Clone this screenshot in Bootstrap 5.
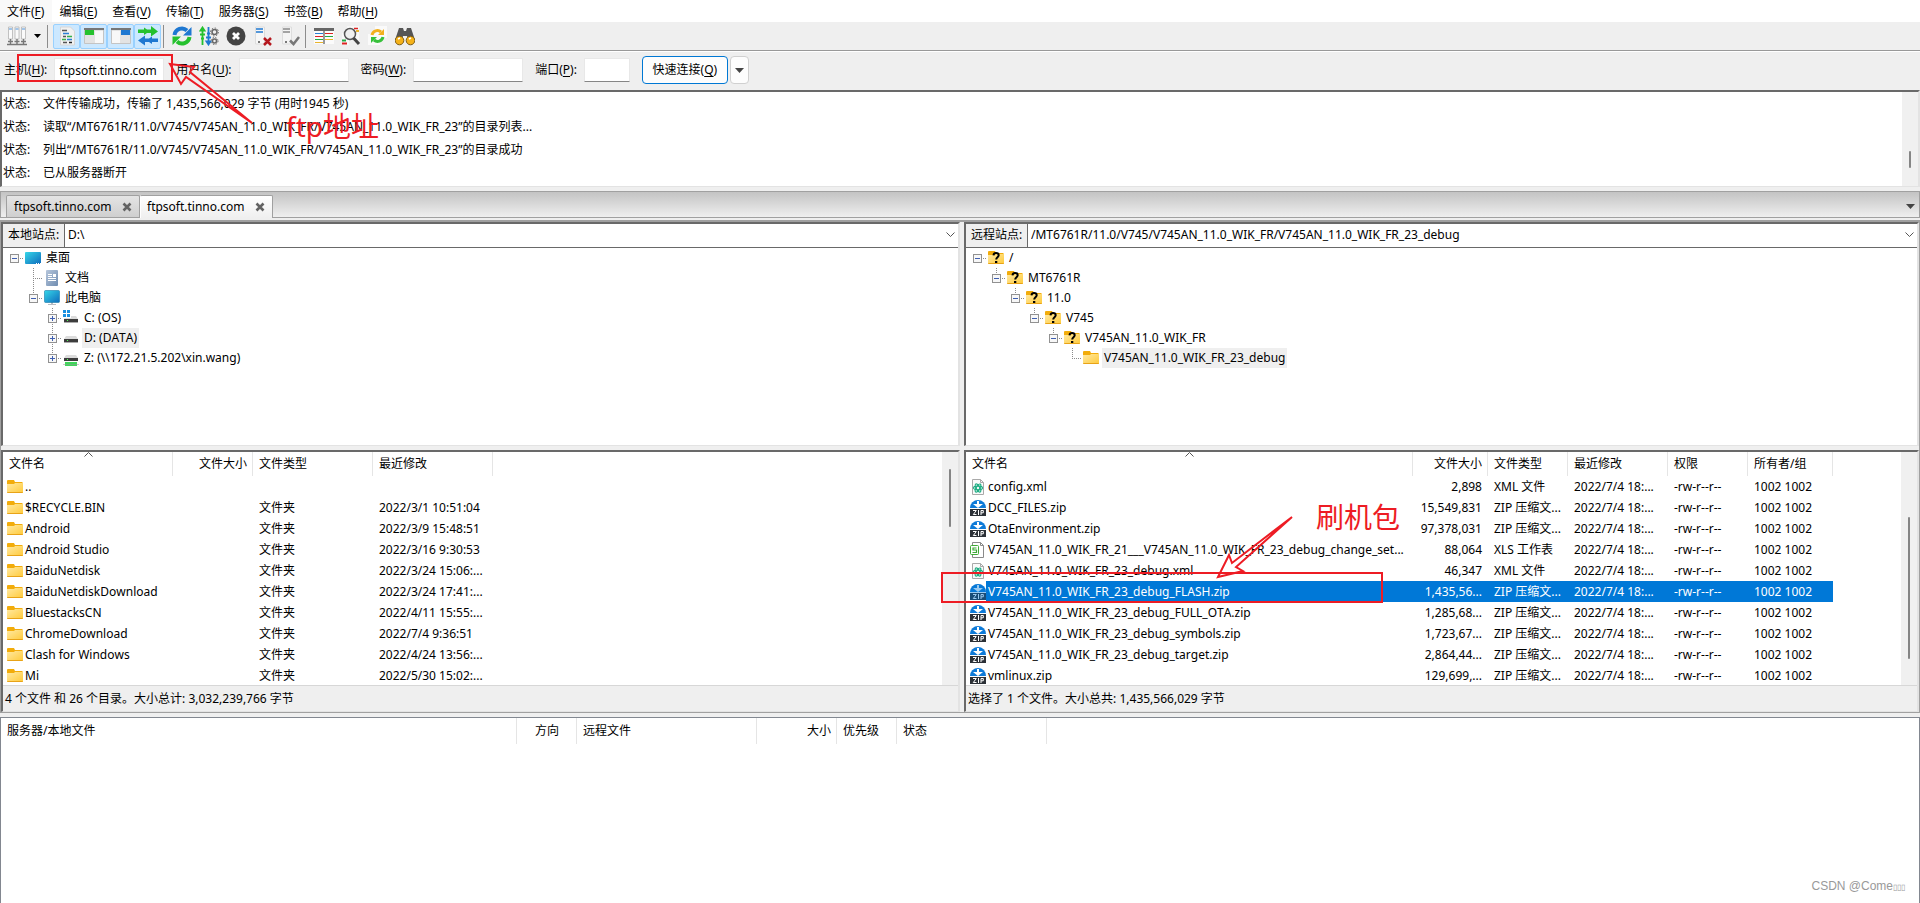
<!DOCTYPE html>
<html lang="zh-CN">
<head>
<meta charset="utf-8">
<meta name="viewport" content="width=device-width, initial-scale=1">
<title>FileZilla</title>
<link href="https://cdn.jsdelivr.net/npm/bootstrap@5.3.0/dist/css/bootstrap.min.css" rel="stylesheet">
<style>
  body { font-family: "Noto Sans", "Noto Sans CJK SC", sans-serif; font-size: 12px; font-kerning: none; line-height: 20px; color: #000; background: #efefef; white-space: nowrap; }
  u { text-underline-offset: 2px; }
  .menubar { height: 22px; background: #fff; }
  .menubar a { color: #000; text-decoration: none; padding: 2px 8px 0 7px; height: 22px; }
  .menubar a:first-child { background: #f9f9f9; }
  .toolbar { height: 29px; border-bottom: 1px solid #999; padding-left: 3px; }
  .tool { width: 27px; height: 25px; padding: 0; border: 1px solid transparent; border-radius: 2px; background: none; display: flex; align-items: center; justify-content: center; }
  .tool.active { background: #cce8ff; border-color: #99d1ff; }
  .caret-tool { width: 15px; }
  .divider { width: 1px; height: 23px; background: #8c8c8c; margin: 0 5px 0 2px; }
  .divider.narrow { margin-right: 4px; }
  .quick { height: 39px; border-top: 1px solid #fff; padding: 0 0 2px 4px; }
  .quick input { height: 24px; width: 110px; border: 1px solid #e8e8e8; border-bottom-color: #868686; background: #fff; padding: 0 4px; margin: 0 12px 0 7px; outline: 0; border-radius: 1px; }
  .quick #port { width: 46px; }
  .connect { height: 28px; width: 86px; border: 1px solid #0078d4; border-radius: 4px; background: #fdfdfd; padding: 0; }
  .connect-menu { height: 28px; width: 19px; margin-left: 2px; border: 1px solid #d0d0d0; border-radius: 4px; background: #fdfdfd; padding: 0; display: flex; align-items: center; justify-content: center; }
  .log { height: 97px; border: 1px solid #e3e3e3; border-top: 2px solid #696969; border-left: 2px solid #696969; border-right-width: 2px; background: #fff; overflow: hidden; }
  .log-line { line-height: 23px; padding-left: 1px; }
  .log-line span:first-child { display: inline-block; width: 40px; }
  .rail { background: #f0f0f0; width: 16px; flex: none; position: relative; }
  .thumb { position: absolute; left: 7px; width: 2px; background: #858585; border-radius: 1px; }
  .tabbar { margin-top: 4px; height: 27px; border: 1px solid #a0a0a0; background: linear-gradient(#c3c3c3, #efefef); padding: 3px 0 0 5px; }
  .tab-item { height: 22px; width: 134px; border: 1px solid #a0a0a0; border-bottom: 0; background: linear-gradient(#e4e4e4, #cfcfcf); padding: 0 7px; border-radius: 2px 2px 0 0; }
  .tab-item.active { background: linear-gradient(#fff, #efefef); height: 23px; border-left-color: #fff; width: 133px; padding-left: 6px; }
  .tab-item button, .tabbar > button { border: 0; background: none; padding: 0; display: flex; }
  .work { border: 1px solid #a0a0a0; border-top: 2px solid #a0a0a0; margin-top: 2px; background: #efefef; gap: 4px; }
  .side-local { width: 50%; }
  .side-remote { flex: 1 1 0; min-width: 0; }
  .pane { border-left: 2px solid #696969; border-top: 2px solid #696969; border-right: 2px solid #e3e3e3; border-bottom: 1px solid #e3e3e3; background: #fff; }
  .pathbar { height: 24px; border-bottom: 1px solid #696969; }
  .pathbar label { width: 62px; background: #efefef; border-right: 1px solid #696969; padding-left: 5px; line-height: 22px; }
  .pathbar select { appearance: none; border: 0; background: #fff; flex: 1; min-width: 0; padding: 0 3px 1px; outline: 0; }
  .pathbar svg { position: absolute; right: 3px; top: 8px; pointer-events: none; }
  .tree { height: 197px; overflow: hidden; padding-left: 2px; }
  .node { height: 20px; display: flex; align-items: center; }
  .node .gap { width: 19px; }
  .joint { width: 19px; height: 20px; display: flex; align-items: center; justify-content: center; margin-right: 1px; background-repeat: no-repeat;
    --h: repeating-linear-gradient(90deg, #8a8a8a 0 1px, transparent 1px 2px);
    --v: repeating-linear-gradient(#8a8a8a 0 1px, transparent 1px 2px); }
  .joint.h { background-image: var(--h); background-position: 9px 10px; background-size: 10px 1px; }
  .joint.th { background-image: var(--h), var(--v); background-position: 9px 10px, 9px 0; background-size: 10px 1px, 1px 11px; }
  .joint.vh { background-image: var(--h), var(--v); background-position: 9px 10px, 9px 0; background-size: 10px 1px, 1px 20px; }
  .node-name { padding: 0 2px; margin-left: 3px; }
  .node-name.picked { background: #efefef; }
  .files { height: 233px; overflow: hidden; }
  .list { table-layout: fixed; border-collapse: separate; border-spacing: 0; flex: none; }
  .list th { font-weight: 400; height: 24px; padding: 0 5px 0 6px; border-right: 1px solid #e5e5e5; position: relative; }
  .list td { height: 21px; line-height: 21px; padding: 0 6px; overflow: hidden; }
  .list td:first-child { padding: 0 0 0 4px; }
  .list .num { text-align: right; }
  .entry { display: flex; align-items: center; height: 21px; }
  .entry span { flex: 1; padding-left: 2px; height: 21px; }
  .sort { position: absolute; left: 50%; top: 0; margin-left: -4px; }
  .chosen td:not(:first-child), .chosen .entry span { background: #0078d7; color: #fff; }
  .summary { height: 26px; line-height: 25px; border-top: 1px solid #d7d7d7; background: #efefef; padding-left: 2px; }
  .queue { margin-top: 4px; border: 1px solid #828790; border-bottom: 0; background: #fff; }
  .queue .list th { height: 26px; }
  .notes { position: absolute; left: 0; top: 0; pointer-events: none; overflow: visible; }
  .notes text { font-size: 28px; fill: #ed1c24; }
  .watermark { position: absolute; right: 15px; bottom: 5px; font-family: "Liberation Sans", sans-serif; color: #999; }
  .watermark span { font-size: 8px; }
</style>
</head>
<body class="d-flex flex-column min-vh-100 position-relative">

<svg width="0" height="0" class="position-absolute" aria-hidden="true">
  <defs>
    <linearGradient id="gFold" x1="0" y1="0" x2="1" y2="1"><stop offset="0" stop-color="#ffe9a2"/><stop offset="1" stop-color="#ffca3a"/></linearGradient>
    <linearGradient id="gScr" x1="0" y1="0" x2="1" y2="1"><stop offset="0" stop-color="#35d6e8"/><stop offset="1" stop-color="#0f6cbd"/></linearGradient>
    <linearGradient id="gDoc" x1="0" y1="0" x2="1" y2="1"><stop offset="0" stop-color="#b7c7dc"/><stop offset="1" stop-color="#6f8cb0"/></linearGradient>
  </defs>
  <symbol id="folder" viewBox="0 0 16 16"><path d="M0 2a1 1 0 0 1 1-1h6l1 2h7l1 1v8H0z" fill="#f2ac0b"/><path d="M0 5h7l1-1h8v9a1 1 0 0 1-1 1H1a1 1 0 0 1-1-1z" fill="url(#gFold)"/><path d="M0 13h16a1 1 0 0 1-1 1H1a1 1 0 0 1-1-1z" fill="#e8a317"/></symbol>
  <symbol id="unknown" viewBox="0 0 16 16"><use href="#folder"/><path d="M5.500 5.400C5.700 3.400 6.900 3 8 3c1.600 0 2.700.9 2.700 2.300C10.700 7.200 8.200 7.300 8.200 9.500" fill="none" stroke="#000" stroke-width="2"/><path d="M7 11h2.300v2H7z"/></symbol>
  <symbol id="desktop" viewBox="0 0 16 16"><rect y="2" width="16" height="12" rx="1" fill="url(#gScr)"/><path d="M11 13.500h1m1 0h1m1 0h1" stroke="#fff"/></symbol>
  <symbol id="pc" viewBox="0 0 16 16"><path d="M7 12h2v3H7zM4 14h8v1H4z" fill="#b7bcc2"/><rect x=".5" y=".5" width="15" height="12" rx="1" fill="url(#gScr)" stroke="#1a7aa8" stroke-width=".6"/></symbol>
  <symbol id="doc" viewBox="0 0 16 16"><rect x="2" width="12" height="16" rx="1" fill="url(#gDoc)"/><path d="M4 4.500h4M4 6.500h4M4 8.500h8M4 10.500h8" stroke="#fff"/><path d="M9 4h3v3H9z" fill="#fff"/></symbol>
  <symbol id="drive" viewBox="0 0 16 16"><path d="M3 6h10l2 3H1z" fill="#dcdcdc"/><path d="M1 9h14v3H1z" fill="#3c3c3c"/><path d="M1 12h14v1H1z" fill="#aaa"/><path d="M4 10h1v1H4z" fill="#5f5"/></symbol>
  <symbol id="osdrive" viewBox="0 0 16 16"><use href="#drive"/><path d="M0 0h8v8H0z" fill="#fff"/><path d="M0 0h3v3H0zM4 0h3v3H4zM0 4h3v3H0zM4 4h3v3H4z" fill="#1a8fe0"/></symbol>
  <symbol id="netdrive" viewBox="0 0 16 16"><path d="M3 5h10l2 3H1z" fill="#dcdcdc"/><path d="M1 8h14v3H1z" fill="#3c3c3c"/><path d="M4 9h1v1H4z" fill="#5f5"/><path d="M2 12h12v4H2z" fill="#3fd65a"/><path d="M0 14.500h16" stroke="#999" stroke-width=".5"/></symbol>
  <symbol id="minus" viewBox="0 0 9 9"><rect x=".5" y=".5" width="8" height="8" fill="#f7f7f7" stroke="#919191"/><path d="M2 4.500h5" stroke="#3f5fb0"/></symbol>
  <symbol id="plus" viewBox="0 0 9 9"><use href="#minus"/><path d="M4.500 2v5" stroke="#3f5fb0"/></symbol>
  <symbol id="xml" viewBox="0 0 16 16"><path d="M2.500.5h8l3 3v12h-11z" fill="#fafafa" stroke="#a9a9a9"/><path d="M10.500.5v3h3" fill="none" stroke="#a9a9a9"/><g fill="none" stroke="#1fae84" stroke-width="1.200"><ellipse cx="8" cy="9" rx="4.500" ry="1.800"/><ellipse cx="8" cy="9" rx="4.500" ry="1.800" transform="rotate(60 8 9)"/><ellipse cx="8" cy="9" rx="4.500" ry="1.800" transform="rotate(120 8 9)"/></g></symbol>
  <symbol id="zip" viewBox="0 0 16 16"><path d="M0 8a8 8 0 0 1 16 0z" fill="#0d7ad8"/><path d="M7 1h2v3h4L8 8 3 4h4z" fill="#fff"/><rect y="9" width="16" height="7" fill="#2b3036"/><path d="M3 10.500h3.300L3.300 14.500H6.500M8.500 10v5M11 15v-4.500h2.300v2.300H11" fill="none" stroke="#fff"/></symbol>
  <symbol id="xls" viewBox="0 0 16 16"><path d="M2.500.5h8l3 3v12h-11z" fill="#fff" stroke="#8a8a8a"/><path d="M10.500.5v3h3" fill="none" stroke="#8a8a8a"/><rect x=".5" y="3.500" width="8" height="9" rx="1" fill="#fff" stroke="#3faa36"/><path d="M6.500 6H3v2h3.500v2.500H2.500" fill="none" stroke="#3faa36" stroke-width="1.200"/></symbol>
  <symbol id="closex" viewBox="0 0 10 10"><path d="M1.500 1.500l7 7M8.500 1.500l-7 7" stroke="#636363" stroke-width="2.600"/></symbol>
  <symbol id="down" viewBox="0 0 9 5"><path d="M0 0h9L4.500 5z" fill="#444"/></symbol>
  <symbol id="chev" viewBox="0 0 9 6"><path d="M.5.5l4 4 4-4" fill="none" stroke="#555"/></symbol>
</svg>

<nav class="menubar d-flex" aria-label="菜单">
  <a href="#">文件(<u>F</u>)</a><a href="#">编辑(<u>E</u>)</a><a href="#">查看(<u>V</u>)</a><a href="#">传输(<u>T</u>)</a><a href="#">服务器(<u>S</u>)</a><a href="#">书签(<u>B</u>)</a><a href="#">帮助(<u>H</u>)</a>
</nav>

<div class="toolbar d-flex align-items-center" role="toolbar">
  <button class="tool" aria-label="站点管理器"><svg width="20" height="20"><g fill="#fafafa" stroke="#b4b4b4" stroke-width=".8"><path d="M1.500 1h4v12h-4zM8 1h4v12H8zM14.500 1h4v12h-4z"/></g><path d="M2 3h3M8.500 3h3M15 3h3" stroke="#4a90d9"/><path d="M1 15.500h5M7.500 15.500h5M14 15.500h5M0 18.500h20M3.500 13v5M10 13v5M16.500 13v5" stroke="#777" stroke-width="1.400"/></svg></button>
  <button class="tool caret-tool" aria-label="站点列表"><svg width="7" height="4"><path d="M0 0h7L3.500 4z"/></svg></button>
  <div class="divider"></div>
  <button class="tool active" aria-label="消息日志"><svg width="20" height="20"><path d="M3.500 1h10l4 4v14h-14z" fill="#f1f1f1" stroke="#d6d6d6"/><path d="M5 4.500h5M6 10.500h3M6 16.500h4" stroke="#555" stroke-width="1.500"/><path d="M6 7.500h6M10 13.500h5" stroke="#2b7fd4" stroke-width="1.500"/><path d="M10 10.500h5M5 13.500h4" stroke="#35b04a" stroke-width="1.500"/><path d="M12 16.500h3" stroke="#222" stroke-width="1.500"/></svg></button>
  <button class="tool active" aria-label="本地目录树"><svg width="20" height="20"><path d="M.5 2.500h19v15H.5z" fill="#e3e3e3" stroke="#c4c4c4"/><path d="M0 2h20v2H0z" fill="#777"/><path d="M11 5h8v12h-8z" fill="#f8f8f8"/><path d="M1 4h9v5H1z" fill="#25c12e"/></svg></button>
  <button class="tool active" aria-label="远程目录树"><svg width="20" height="20"><path d="M.5 2.500h19v15H.5z" fill="#e3e3e3" stroke="#c4c4c4"/><path d="M0 2h20v2H0z" fill="#777"/><path d="M1 5h8v12H1z" fill="#f8f8f8"/><path d="M10 4h9v5h-9z" fill="#1f78d1"/></svg></button>
  <button class="tool active" aria-label="传输队列"><svg width="20" height="20"><path d="M0 3.500h6v-2l3 2h4V0l7 5.500-7 5V7H9L6 9V7H0z" fill="#25c12e"/><path d="M20 12.500h-6v-2l-3 2H7V9.500l-7 5 7 5V16h4l3 2v-2h6z" fill="#1f78d1"/></svg></button>
  <div class="divider narrow"></div>
  <button class="tool" aria-label="刷新"><svg width="20" height="20"><path d="M2.500 9A7.500 7.500 0 0 1 15 4.500" fill="none" stroke="#1f78d1" stroke-width="4"/><path d="M19.500 1v8.500H11z" fill="#1f78d1"/><path d="M17.500 11A7.500 7.500 0 0 1 5 15.500" fill="none" stroke="#25c12e" stroke-width="4"/><path d="M.5 19v-8.500H9z" fill="#25c12e"/></svg></button>
  <button class="tool" aria-label="处理队列"><svg width="20" height="20"><path d="M3.500 19V3M1.500 4.500l2-3 2 3zM1 8.500h5M2 12.500h3" fill="#25c12e" stroke="#25c12e" stroke-width="1.800"/><path d="M9.500 1v16M7.500 15.500l2 3 2-3zM7 11.500h5M8 7.500h3" fill="#1f78d1" stroke="#1f78d1" stroke-width="1.800"/><g fill="none" stroke="#666"><circle cx="15.500" cy="6" r="2.500" stroke-width="1.500"/><circle cx="15.500" cy="6" r="4" stroke-dasharray="1.500 1.600"/><circle cx="15.500" cy="15" r="2" stroke-width="1.500"/><circle cx="15.500" cy="15" r="3.500" stroke-dasharray="1.400 1.400"/></g></svg></button>
  <button class="tool" aria-label="取消"><svg width="20" height="20"><circle cx="10" cy="10" r="9.500" fill="#444"/><path d="M7 7l6 6M13 7l-6 6" stroke="#fff" stroke-width="2.800"/></svg></button>
  <button class="tool" aria-label="断开"><svg width="20" height="20"><path d="M2.500 1h9v17h-9z" fill="#f7f7f7" stroke="#ddd"/><path d="M3 3h7M3 6h7" stroke="#1f78d1" stroke-width="1.500"/><path d="M5 16h2" stroke="#777" stroke-width="2"/><path d="M11 12l7 7M18 12l-7 7" stroke="#b5181f" stroke-width="2.500"/></svg></button>
  <button class="tool" aria-label="重新连接"><svg width="20" height="20"><path d="M2.500 1h9v17h-9z" fill="#f4f4f4" stroke="#ddd"/><path d="M3 3h7M3 6h7" stroke="#888" stroke-width="1.500"/><path d="M5 16h2" stroke="#777" stroke-width="2"/><path d="M10 14.500l3.500 3.500 5.500-7" fill="none" stroke="#777" stroke-width="2.500"/></svg></button>
  <div class="divider narrow"></div>
  <button class="tool" aria-label="过滤"><svg width="20" height="18"><path d="M0 1h20v16H0z" fill="#fbfbfb"/><path d="M0 1h20v3H0z" fill="#666"/><path d="M1 6.500h8" stroke="#2b7fd4"/><path d="M1 9.500h8M11 6.500h8" stroke="#d22"/><path d="M1 12.500h8M11 9.500h8" stroke="#2a4"/><path d="M1 15.500h8M11 12.500h8" stroke="#e9b42c"/><path d="M10 4v13" stroke="#777" stroke-width="1.500"/></svg></button>
  <button class="tool" aria-label="搜索"><svg width="20" height="20"><path d="M6 0h12v14H6zM1 7h7v12H1z" fill="#f8f8f8"/><path d="M13 2.500h4" stroke="#d22" stroke-width="1.500"/><path d="M15 5h3" stroke="#e9b42c" stroke-width="2"/><path d="M1 14.500h4" stroke="#2a4" stroke-width="2"/><path d="M1 17.500h5" stroke="#d22" stroke-width="2"/><circle cx="9" cy="8" r="5.500" fill="#eee" fill-opacity=".8" stroke="#555" stroke-width="1.500"/><path d="M12.500 12l5.500 6" stroke="#444" stroke-width="3"/></svg></button>
  <button class="tool" aria-label="同步浏览"><svg width="20" height="20"><path d="M7 0h12v12H7zM0 8h12v11H0z" fill="#fafafa"/><path d="M4 9a5.500 5.500 0 0 1 9-3" fill="none" stroke="#f2b01e" stroke-width="3"/><path d="M16 3v6h-6z" fill="#f2b01e"/><path d="M15 11a5.500 5.500 0 0 1-9 3" fill="none" stroke="#38c13c" stroke-width="3"/><path d="M3 17v-6h6z" fill="#38c13c"/></svg></button>
  <button class="tool" aria-label="查找"><svg width="20" height="20"><path d="M4 2h4l1 3h2l1-3h4l4 12h-7l-1-4H8l-1 4H0z" fill="#555"/><circle cx="4.500" cy="14.500" r="4.300" fill="#f5b21a" stroke="#7a5b18"/><circle cx="15.500" cy="14.500" r="4.300" fill="#f5b21a" stroke="#7a5b18"/><path d="M3 13l2-1M14 13l2-1" stroke="#fff" stroke-width="1.500"/></svg></button>
</div>

<form class="quick d-flex align-items-center">
  <label for="host">主机(<u>H</u>):</label><input id="host" value="ftpsoft.tinno.com">
  <label for="user">用户名(<u>U</u>):</label><input id="user">
  <label for="pass">密码(<u>W</u>):</label><input id="pass" type="password">
  <label for="port">端口(<u>P</u>):</label><input id="port">
  <button type="button" class="connect">快速连接(<u>Q</u>)</button>
  <button type="button" class="connect-menu" aria-label="历史"><svg width="9" height="5"><use href="#down"/></svg></button>
</form>

<section class="log d-flex" aria-label="日志">
  <div class="flex-grow-1">
    <div class="log-line"><span>状态:</span><span>文件传输成功，传输了 1,435,566,029 字节 (用时1945 秒)</span></div>
    <div class="log-line"><span>状态:</span><span>读取“/MT6761R/11.0/V745/V745AN_11.0_WIK_FR/V745AN_11.0_WIK_FR_23”的目录列表...</span></div>
    <div class="log-line"><span>状态:</span><span>列出“/MT6761R/11.0/V745/V745AN_11.0_WIK_FR/V745AN_11.0_WIK_FR_23”的目录成功</span></div>
    <div class="log-line"><span>状态:</span><span>已从服务器断开</span></div>
  </div>
  <div class="rail"><div class="thumb" style="top:59px;height:17px"></div></div>
</section>

<div class="tabbar d-flex">
  <div class="tab-item d-flex align-items-center justify-content-between">ftpsoft.tinno.com<button aria-label="关闭"><svg width="10" height="10"><use href="#closex"/></svg></button></div>
  <div class="tab-item active d-flex align-items-center justify-content-between">ftpsoft.tinno.com<button aria-label="关闭"><svg width="10" height="10"><use href="#closex"/></svg></button></div>
  <button class="ms-auto me-1 align-self-center" aria-label="标签列表"><svg width="9" height="5"><use href="#down"/></svg></button>
</div>

<main class="work d-flex">
  <section class="side-local">
    <div class="pane">
      <div class="pathbar d-flex position-relative"><label for="lpath">本地站点:</label><select id="lpath"><option>D:\</option></select><svg width="9" height="6"><use href="#chev"/></svg></div>
      <div class="tree">
        <div class="node"><span class="joint h"><svg width="9" height="9"><use href="#minus"/></svg></span><svg width="16" height="16"><use href="#desktop"/></svg><span class="node-name">桌面</span></div>
        <div class="node"><span class="gap"></span><span class="joint vh"></span><svg width="16" height="16"><use href="#doc"/></svg><span class="node-name">文档</span></div>
        <div class="node"><span class="gap"></span><span class="joint th"><svg width="9" height="9"><use href="#minus"/></svg></span><svg width="16" height="16"><use href="#pc"/></svg><span class="node-name">此电脑</span></div>
        <div class="node"><span class="gap"></span><span class="gap"></span><span class="joint vh"><svg width="9" height="9"><use href="#plus"/></svg></span><svg width="16" height="16"><use href="#osdrive"/></svg><span class="node-name">C: (OS)</span></div>
        <div class="node"><span class="gap"></span><span class="gap"></span><span class="joint vh"><svg width="9" height="9"><use href="#plus"/></svg></span><svg width="16" height="16"><use href="#drive"/></svg><span class="node-name picked">D: (DATA)</span></div>
        <div class="node"><span class="gap"></span><span class="gap"></span><span class="joint th"><svg width="9" height="9"><use href="#plus"/></svg></span><svg width="16" height="16"><use href="#netdrive"/></svg><span class="node-name">Z: (\\172.21.5.202\xin.wang)</span></div>
      </div>
    </div>
    <div class="pane mt-1">
      <div class="files d-flex justify-content-between">
        <table class="list">
          <colgroup><col style="width:170px"><col style="width:80px"><col style="width:120px"><col style="width:120px"></colgroup>
          <thead><tr><th>文件名<svg class="sort" width="9" height="5"><path d="M.5 4.500l4-4 4 4" fill="none" stroke="#555"/></svg></th><th class="num">文件大小</th><th>文件类型</th><th>最近修改</th></tr></thead>
          <tbody>
            <tr><td><div class="entry"><svg width="16" height="16"><use href="#folder"/></svg><span>..</span></div></td><td></td><td></td><td></td></tr>
            <tr><td><div class="entry"><svg width="16" height="16"><use href="#folder"/></svg><span>$RECYCLE.BIN</span></div></td><td></td><td>文件夹</td><td>2022/3/1 10:51:04</td></tr>
            <tr><td><div class="entry"><svg width="16" height="16"><use href="#folder"/></svg><span>Android</span></div></td><td></td><td>文件夹</td><td>2022/3/9 15:48:51</td></tr>
            <tr><td><div class="entry"><svg width="16" height="16"><use href="#folder"/></svg><span>Android Studio</span></div></td><td></td><td>文件夹</td><td>2022/3/16 9:30:53</td></tr>
            <tr><td><div class="entry"><svg width="16" height="16"><use href="#folder"/></svg><span>BaiduNetdisk</span></div></td><td></td><td>文件夹</td><td>2022/3/24 15:06:...</td></tr>
            <tr><td><div class="entry"><svg width="16" height="16"><use href="#folder"/></svg><span>BaiduNetdiskDownload</span></div></td><td></td><td>文件夹</td><td>2022/3/24 17:41:...</td></tr>
            <tr><td><div class="entry"><svg width="16" height="16"><use href="#folder"/></svg><span>BluestacksCN</span></div></td><td></td><td>文件夹</td><td>2022/4/11 15:55:...</td></tr>
            <tr><td><div class="entry"><svg width="16" height="16"><use href="#folder"/></svg><span>ChromeDownload</span></div></td><td></td><td>文件夹</td><td>2022/7/4 9:36:51</td></tr>
            <tr><td><div class="entry"><svg width="16" height="16"><use href="#folder"/></svg><span>Clash for Windows</span></div></td><td></td><td>文件夹</td><td>2022/4/24 13:56:...</td></tr>
            <tr><td><div class="entry"><svg width="16" height="16"><use href="#folder"/></svg><span>Mi</span></div></td><td></td><td>文件夹</td><td>2022/5/30 15:02:...</td></tr>
          </tbody>
        </table>
        <div class="rail"><div class="thumb" style="top:17px;height:58px"></div></div>
      </div>
      <div class="summary">4 个文件 和 26 个目录。大小总计: 3,032,239,766 字节</div>
    </div>
  </section>

  <section class="side-remote">
    <div class="pane">
      <div class="pathbar d-flex position-relative"><label for="rpath">远程站点:</label><select id="rpath"><option>/MT6761R/11.0/V745/V745AN_11.0_WIK_FR/V745AN_11.0_WIK_FR_23_debug</option></select><svg width="9" height="6"><use href="#chev"/></svg></div>
      <div class="tree">
        <div class="node"><span class="joint h"><svg width="9" height="9"><use href="#minus"/></svg></span><svg width="16" height="16"><use href="#unknown"/></svg><span class="node-name">/</span></div>
        <div class="node"><span class="gap"></span><span class="joint th"><svg width="9" height="9"><use href="#minus"/></svg></span><svg width="16" height="16"><use href="#unknown"/></svg><span class="node-name">MT6761R</span></div>
        <div class="node"><span class="gap"></span><span class="gap"></span><span class="joint th"><svg width="9" height="9"><use href="#minus"/></svg></span><svg width="16" height="16"><use href="#unknown"/></svg><span class="node-name">11.0</span></div>
        <div class="node"><span class="gap"></span><span class="gap"></span><span class="gap"></span><span class="joint th"><svg width="9" height="9"><use href="#minus"/></svg></span><svg width="16" height="16"><use href="#unknown"/></svg><span class="node-name">V745</span></div>
        <div class="node"><span class="gap"></span><span class="gap"></span><span class="gap"></span><span class="gap"></span><span class="joint th"><svg width="9" height="9"><use href="#minus"/></svg></span><svg width="16" height="16"><use href="#unknown"/></svg><span class="node-name">V745AN_11.0_WIK_FR</span></div>
        <div class="node"><span class="gap"></span><span class="gap"></span><span class="gap"></span><span class="gap"></span><span class="gap"></span><span class="joint th"></span><svg width="16" height="16"><use href="#folder"/></svg><span class="node-name picked">V745AN_11.0_WIK_FR_23_debug</span></div>
      </div>
    </div>
    <div class="pane mt-1">
      <div class="files d-flex justify-content-between">
        <table class="list">
          <colgroup><col style="width:447px"><col style="width:75px"><col style="width:80px"><col style="width:100px"><col style="width:80px"><col style="width:85px"></colgroup>
          <thead><tr><th>文件名<svg class="sort" width="9" height="5"><path d="M.5 4.500l4-4 4 4" fill="none" stroke="#555"/></svg></th><th class="num">文件大小</th><th>文件类型</th><th>最近修改</th><th>权限</th><th>所有者/组</th></tr></thead>
          <tbody>
            <tr><td><div class="entry"><svg width="16" height="16"><use href="#xml"/></svg><span>config.xml</span></div></td><td class="num">2,898</td><td>XML 文件</td><td>2022/7/4 18:...</td><td>-rw-r--r--</td><td>1002 1002</td></tr>
            <tr><td><div class="entry"><svg width="16" height="16"><use href="#zip"/></svg><span>DCC_FILES.zip</span></div></td><td class="num">15,549,831</td><td>ZIP 压缩文...</td><td>2022/7/4 18:...</td><td>-rw-r--r--</td><td>1002 1002</td></tr>
            <tr><td><div class="entry"><svg width="16" height="16"><use href="#zip"/></svg><span>OtaEnvironment.zip</span></div></td><td class="num">97,378,031</td><td>ZIP 压缩文...</td><td>2022/7/4 18:...</td><td>-rw-r--r--</td><td>1002 1002</td></tr>
            <tr><td><div class="entry"><svg width="16" height="16"><use href="#xls"/></svg><span>V745AN_11.0_WIK_FR_21___V745AN_11.0_WIK_FR_23_debug_change_set...</span></div></td><td class="num">88,064</td><td>XLS 工作表</td><td>2022/7/4 18:...</td><td>-rw-r--r--</td><td>1002 1002</td></tr>
            <tr><td><div class="entry"><svg width="16" height="16"><use href="#xml"/></svg><span>V745AN_11.0_WIK_FR_23_debug.xml</span></div></td><td class="num">46,347</td><td>XML 文件</td><td>2022/7/4 18:...</td><td>-rw-r--r--</td><td>1002 1002</td></tr>
            <tr class="chosen"><td><div class="entry"><svg width="16" height="16"><use href="#zip"/><path d="M0 8a8 8 0 0 1 16 0v8H0z" fill="#0078d7" opacity=".4"/></svg><span>V745AN_11.0_WIK_FR_23_debug_FLASH.zip</span></div></td><td class="num">1,435,56...</td><td>ZIP 压缩文...</td><td>2022/7/4 18:...</td><td>-rw-r--r--</td><td>1002 1002</td></tr>
            <tr><td><div class="entry"><svg width="16" height="16"><use href="#zip"/></svg><span>V745AN_11.0_WIK_FR_23_debug_FULL_OTA.zip</span></div></td><td class="num">1,285,68...</td><td>ZIP 压缩文...</td><td>2022/7/4 18:...</td><td>-rw-r--r--</td><td>1002 1002</td></tr>
            <tr><td><div class="entry"><svg width="16" height="16"><use href="#zip"/></svg><span>V745AN_11.0_WIK_FR_23_debug_symbols.zip</span></div></td><td class="num">1,723,67...</td><td>ZIP 压缩文...</td><td>2022/7/4 18:...</td><td>-rw-r--r--</td><td>1002 1002</td></tr>
            <tr><td><div class="entry"><svg width="16" height="16"><use href="#zip"/></svg><span>V745AN_11.0_WIK_FR_23_debug_target.zip</span></div></td><td class="num">2,864,44...</td><td>ZIP 压缩文...</td><td>2022/7/4 18:...</td><td>-rw-r--r--</td><td>1002 1002</td></tr>
            <tr><td><div class="entry"><svg width="16" height="16"><use href="#zip"/></svg><span>vmlinux.zip</span></div></td><td class="num">129,699,...</td><td>ZIP 压缩文...</td><td>2022/7/4 18:...</td><td>-rw-r--r--</td><td>1002 1002</td></tr>
          </tbody>
        </table>
        <div class="rail"><div class="thumb" style="top:65px;height:142px"></div></div>
      </div>
      <div class="summary">选择了 1 个文件。大小总共: 1,435,566,029 字节</div>
    </div>
  </section>
</main>

<section class="queue flex-grow-1">
  <table class="list">
    <colgroup><col style="width:516px"><col style="width:60px"><col style="width:180px"><col style="width:80px"><col style="width:60px"><col style="width:150px"></colgroup>
    <thead><tr><th>服务器/本地文件</th><th class="text-center">方向</th><th>远程文件</th><th class="num">大小</th><th>优先级</th><th>状态</th></tr></thead>
  </table>
</section>

<svg class="notes" width="1400" height="610">
  <g fill="none" stroke="#ed1c24" stroke-width="2">
    <rect x="18" y="55" width="154" height="26"/>
    <rect x="942" y="573" width="440" height="29"/>
    <path d="M170 64L194 67L190 72L252 123L186 77L181 84Z"/>
    <path d="M1218 577L1229 555L1232 563L1292 517L1236 567L1243 571Z"/>
  </g>
  <text x="286" y="137">ftp地址</text>
  <text x="1316" y="528">刷机包</text>
</svg>
<div class="watermark">CSDN @Come<span>▯▯▯</span></div>

<script src="https://cdn.jsdelivr.net/npm/bootstrap@5.3.0/dist/js/bootstrap.bundle.min.js"></script>
</body>
</html>
